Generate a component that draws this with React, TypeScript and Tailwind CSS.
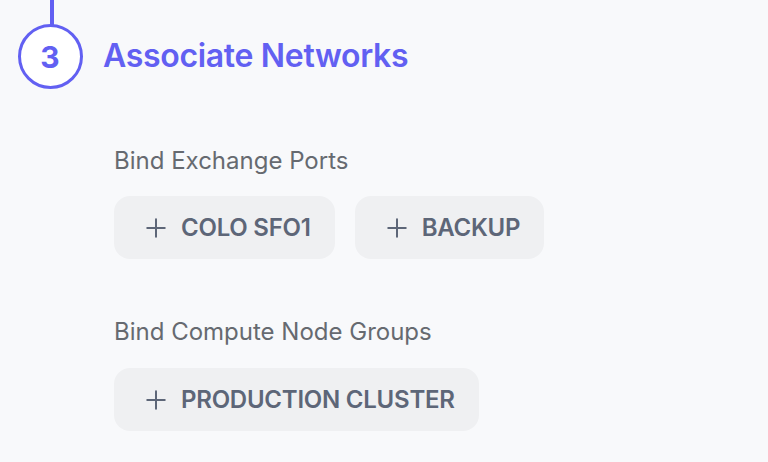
import { Plus } from "lucide-react"

function AddButton({ label }: { label: string }) {
  return (
    <button className="flex h-[63px] items-center gap-[10px] rounded-2xl bg-[#eff0f2] pl-[27px] pr-[24px] text-[24px] font-semibold tracking-[-0.01em] text-[#5d6678]">
      <Plus className="h-[30px] w-[30px]" strokeWidth={1.6} />
      <span>{label}</span>
    </button>
  )
}

export default function App() {
  return (
    <div className="min-h-[462px] w-full bg-[#f8f9fb] font-['Inter',sans-serif]">
      {/* Step header */}
      <div className="flex">
        <div className="flex w-[100px] flex-col items-center">
          <div className="ml-[4px] h-[25px] w-[4px] bg-[#6260f2]" />
          <div className="-mt-[1px] flex h-[65px] w-[65px] items-center justify-center rounded-full border-[3.5px] border-[#6260f2] bg-white text-[30px] font-bold leading-none text-[#6260f2]">
            3
          </div>
        </div>
        <div className="flex h-[89px] items-end pb-[14px] pl-[3px]">
          <h2 className="text-[32px] font-semibold leading-[38px] tracking-[-0.01em] text-[#6260f2]">Associate Networks</h2>
        </div>
      </div>

      <div className="pl-[114px] pt-[57px]">
        <div className="text-[24px] leading-[30px] text-[#666a70]">Bind Exchange Ports</div>
        <div className="mt-[20px] flex gap-[20px]">
          <AddButton label="COLO SFO1" />
          <AddButton label="BACKUP" />
        </div>

        <div className="mt-[58px] text-[24px] leading-[30px] text-[#666a70]">Bind Compute Node Groups</div>
        <div className="mt-[21px] flex gap-[20px]">
          <AddButton label="PRODUCTION CLUSTER" />
        </div>
      </div>
    </div>
  )
}
